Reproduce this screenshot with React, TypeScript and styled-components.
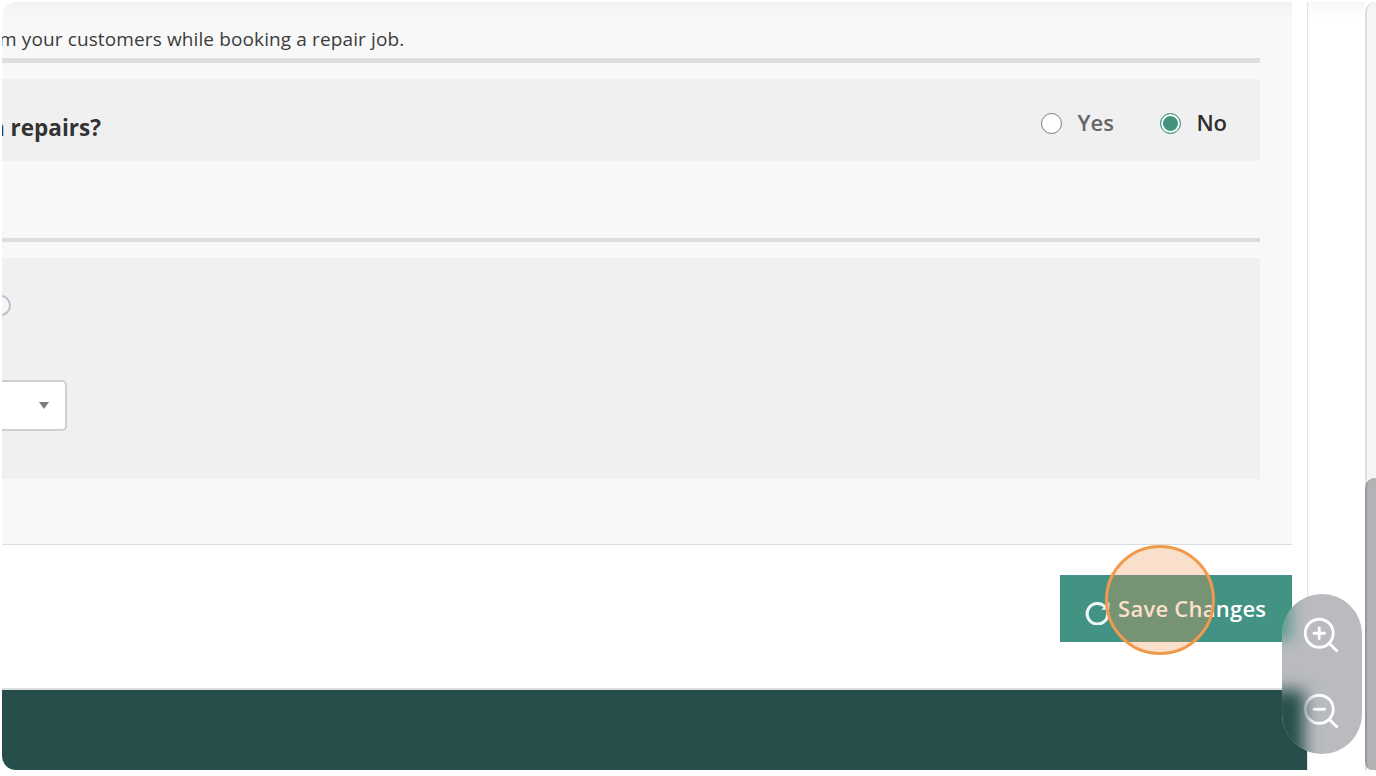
import React from 'react'
import styled, { createGlobalStyle } from 'styled-components'
import { ZoomIn, ZoomOut } from 'lucide-react'

const GlobalStyle = createGlobalStyle`
	html, body {
		margin: 0;
		padding: 0;
		background: #fff;
	}
	body {
		font-family: 'Open Sans', 'Liberation Sans', sans-serif;
		overflow: hidden;
	}
	* {
		box-sizing: border-box;
	}
`

const Page = styled.div`
	position: relative;
	width: 1376px;
	height: 776px;
	padding: 2px 0 6px 2px;
	background: #fff;
`

const Window = styled.div`
	display: flex;
	height: 768px;
	overflow: hidden;
	border-radius: 14px 0 0 14px;
`

const Main = styled.main`
	display: flex;
	flex-direction: column;
	width: 1307px;
	border-right: 1px solid #e4e4e4;
`

const Panel = styled.section`
	height: 543px;
	margin-right: 15px;
	padding: 26px 32px 0 0;
	background: linear-gradient(#f3f3f3 0, #f8f8f8 18px);
	border-bottom: 1px solid #dcdcdc;
	overflow: hidden;
`

const Note = styled.p`
	margin: 0 0 8px -3px;
	height: 22px;
	font-size: 19px;
	line-height: 22px;
	letter-spacing: 0.12px;
	color: #3c3c3c;
	white-space: nowrap;
`

const Rule = styled.hr<{ $thin?: boolean }>`
	height: ${(p) => (p.$thin ? '4px' : '5px')};
	margin: 0;
	border: 0;
	background: #dedede;
`

const QuestionRow = styled.div`
	display: flex;
	align-items: center;
	justify-content: space-between;
	height: 82px;
	margin: 16px 0 77px;
	padding-right: 33px;
	background: #f0f0f0;
`

const Question = styled.h3`
	margin: 14px 0 0 -26px;
	font-size: 22.5px;
	font-weight: 700;
	color: #333;
	white-space: nowrap;
`

const RadioGroup = styled.div`
	display: flex;
	align-items: center;
	gap: 46px;
	margin-top: 3px;
`

const RadioLabel = styled.label<{ $active?: boolean }>`
	display: flex;
	align-items: center;
	gap: 15.5px;
	font-size: 22px;
	font-weight: 600;
	color: ${(p) => (p.$active ? '#2e2e2e' : '#666')};
`

const RadioCircle = styled.span<{ $active?: boolean }>`
	width: 21px;
	height: 21px;
	margin-top: 4px;
	border-radius: 50%;
	border: ${(p) => (p.$active ? '1.5px solid #42947f' : '1.5px solid #7c7c7c')};
	background: ${(p) => (p.$active ? '#42947f' : '#fff')};
	box-shadow: ${(p) => (p.$active ? 'inset 0 0 0 2px #fff' : 'none')};
`

const OptionsBlock = styled.div`
	display: flex;
	flex-direction: column;
	height: 221px;
	margin-top: 16px;
	padding-top: 37px;
	background: #f0f0f0;
`

const ClippedRadio = styled.span`
	display: block;
	width: 21px;
	height: 21px;
	margin-left: -12px;
	border-radius: 50%;
	border: 2px solid #b9c1cc;
	background: #f6f6f6;
`

const FakeSelect = styled.div`
	display: flex;
	align-items: center;
	justify-content: flex-end;
	width: 200px;
	height: 51px;
	margin: 64px 0 0 -135px;
	padding-right: 16px;
	background: #fff;
	border: 2px solid #cfcfcf;
	border-radius: 5px;
`

const Caret = styled.span`
	width: 0;
	height: 0;
	border-left: 5px solid transparent;
	border-right: 5px solid transparent;
	border-top: 7px solid #7d7d7d;
`

const SaveBar = styled.div`
	display: flex;
	justify-content: flex-end;
	align-items: flex-start;
	height: 145px;
	padding: 30px 15px 0 0;
	background: #fff;
	border-bottom: 2px solid #dedede;
`

const SaveButton = styled.button`
	position: relative;
	display: flex;
	align-items: center;
	gap: 7px;
	width: 232px;
	height: 67px;
	padding: 0 0 2px 25px;
	border: 0;
	border-top: 1px solid #4a8d92;
	background: #429384;
	color: #fff;
	font-family: inherit;
	font-size: 22px;
	font-weight: 600;
	letter-spacing: 0.25px;
	white-space: nowrap;
`

const RefreshSvg = styled.svg`
	margin-top: 7px;
	flex: none;
`

const Spotlight = styled.span`
	position: absolute;
	left: 45px;
	top: -31px;
	width: 110px;
	height: 110px;
	border-radius: 50%;
	border: 3.5px solid #f09a4f;
	background: rgba(240, 150, 80, 0.3);
`

const Footer = styled.footer`
	flex: 1;
	background: #264e4b;
`

const SideColumn = styled.aside`
	width: 57px;
	background: linear-gradient(#f6f6f6 0, #fff 16px);
`

const ScrollTrack = styled.div`
	display: flex;
	flex-direction: column;
	justify-content: flex-end;
	width: 11px;
	background: #f5f5f5;
	border-left: 2px solid #dedede;
	border-top-left-radius: 10px;
`

const ScrollThumb = styled.div`
	height: 292px;
	margin-left: -2px;
	background: #b3b3b7;
	border-left: 2px solid #999;
	border-radius: 10px 0 0 8px;
`

const ZoomControl = styled.div`
	position: absolute;
	right: 14px;
	bottom: 22px;
	display: flex;
	flex-direction: column;
	align-items: center;
	gap: 34px;
	width: 80px;
	height: 160px;
	padding: 20px 3px 0 0;
	border-radius: 40px;
	background: #babbbf;
	overflow: hidden;
	color: #fff;
	svg {
		position: relative;
		flex: none;
	}
	&::before {
		content: '';
		position: absolute;
		left: -14px;
		top: -6px;
		width: 24px;
		height: 52px;
		background: #3f8f82;
		opacity: 0.7;
		filter: blur(7px);
	}
	&::after {
		content: '';
		position: absolute;
		left: -12px;
		top: 96px;
		width: 34px;
		height: 80px;
		background: #264e4b;
		filter: blur(8px);
	}
`

const RefreshIcon = () => (
	<RefreshSvg width="26" height="26" viewBox="0 0 24 24" fill="none">
		<path
			d="M18.5 7.2A9.5 9.5 0 1 0 21 13"
			stroke="#eef7f3"
			strokeWidth="2.8"
			strokeLinecap="round"
		/>
		<path d="M22.5 2.5V10H15z" fill="#eef7f3" />
	</RefreshSvg>
)

const App = () => {
	return (
		<Page>
			<GlobalStyle />
			<Window>
				<Main>
					<Panel>
						<Note>m your customers while booking a repair job.</Note>
						<Rule />
						<QuestionRow>
							<Question>on repairs?</Question>
							<RadioGroup>
								<RadioLabel>
									<RadioCircle />
									Yes
								</RadioLabel>
								<RadioLabel $active>
									<RadioCircle $active />
									No
								</RadioLabel>
							</RadioGroup>
						</QuestionRow>
						<Rule $thin />
						<OptionsBlock>
							<ClippedRadio />
							<FakeSelect>
								<Caret />
							</FakeSelect>
						</OptionsBlock>
					</Panel>
					<SaveBar>
						<SaveButton>
							<RefreshIcon />
							Save Changes
							<Spotlight />
						</SaveButton>
					</SaveBar>
					<Footer />
				</Main>
				<SideColumn />
				<ScrollTrack>
					<ScrollThumb />
				</ScrollTrack>
			</Window>
			<ZoomControl>
				<ZoomIn size={42} strokeWidth={1.6} />
				<ZoomOut size={42} strokeWidth={1.6} />
			</ZoomControl>
		</Page>
	)
}

export default App
